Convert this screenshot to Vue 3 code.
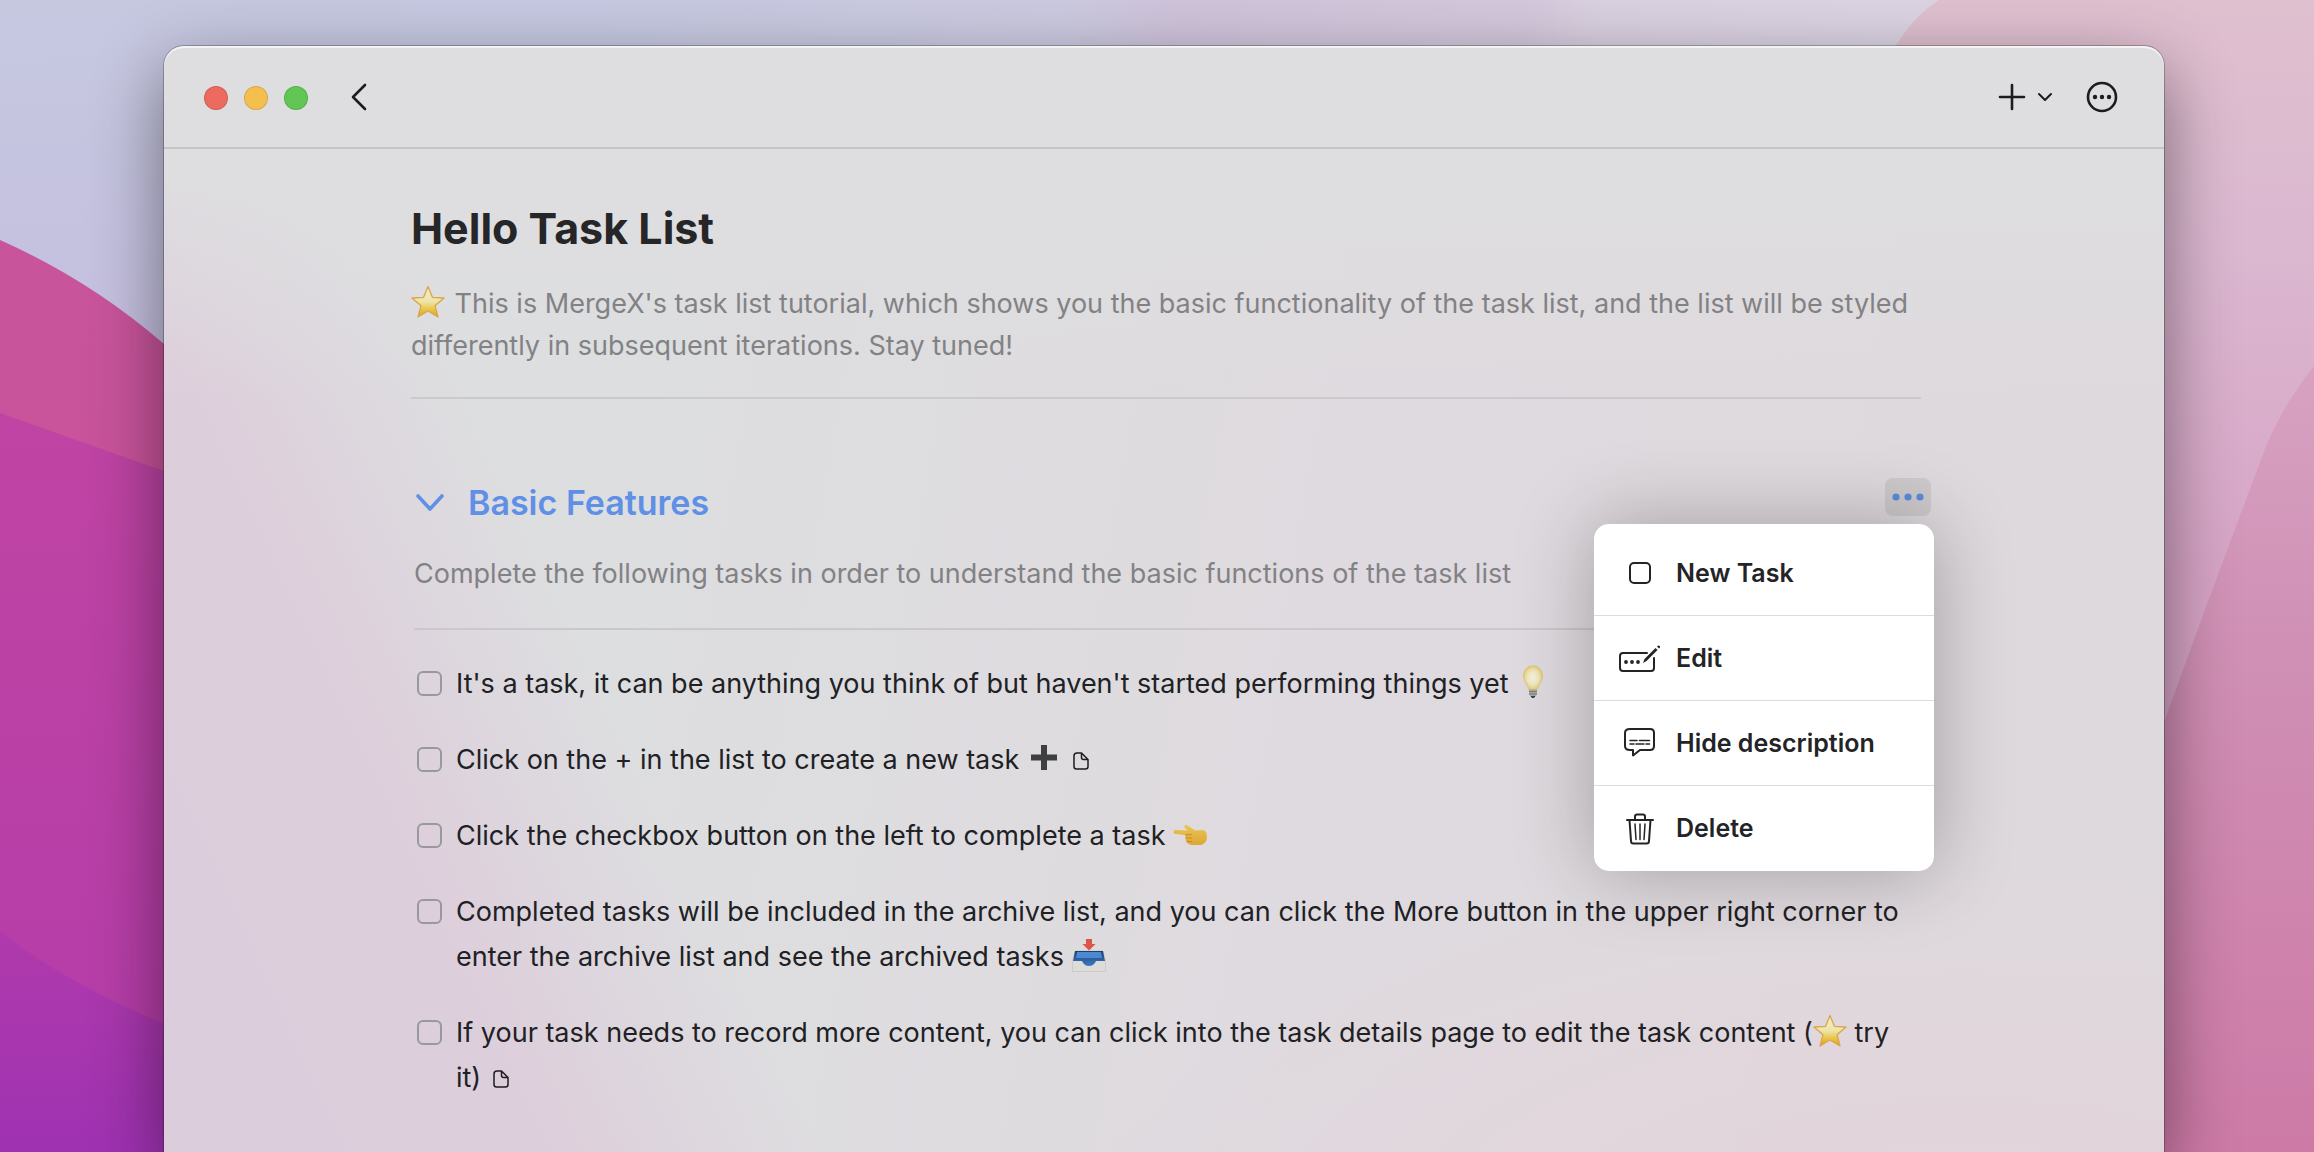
<script setup>
import { ref } from 'vue'

const groupOpen = ref(true)
const menu = [
  { icon: 'square', label: 'New Task' },
  { icon: 'edit', label: 'Edit' },
  { icon: 'bubble', label: 'Hide description' },
  { icon: 'trash', label: 'Delete' },
]
const tasks = ref([
  { done: false, parts: [{ text: "It's a task, it can be anything you think of but haven't started performing things yet " }, { icon: 'bulb' }] },
  { done: false, parts: [{ text: 'Click on the + in the list to create a new task ' }, { icon: 'plus' }, { text: ' ' }, { icon: 'file' }] },
  { done: false, parts: [{ text: 'Click the checkbox button on the left to complete a task ' }, { icon: 'hand' }] },
  { done: false, parts: [{ text: 'Completed tasks will be included in the archive list, and you can click the More button in the upper right corner to enter the archive list and see the archived tasks ' }, { icon: 'inbox' }] },
  { done: false, parts: [{ text: 'If your task needs to record more content, you can click into the task details page to edit the task content (' }, { icon: 'star' }, { text: ' try ' }, { text: 'it) ' }, { icon: 'file' }] },
])
</script>

<template>
  <div class="desktop">
    <svg class="wallpaper" viewBox="0 0 2314 1152" preserveAspectRatio="none" aria-hidden="true">
      <defs>
        <linearGradient id="sky" x1="0" y1="0" x2="1" y2="0">
          <stop offset="0" stop-color="#c6c8e0" />
          <stop offset="0.25" stop-color="#c5c8e0" />
          <stop offset="0.46" stop-color="#cccae0" />
          <stop offset="0.51" stop-color="#cfc3da" />
          <stop offset="0.66" stop-color="#d4c8dc" />
          <stop offset="0.69" stop-color="#d9d0e0" />
          <stop offset="0.84" stop-color="#dcd4e3" />
        </linearGradient>
        <linearGradient id="skyLow" x1="0" y1="0" x2="0" y2="1">
          <stop offset="0" stop-color="#c4c0e0" stop-opacity="0" />
          <stop offset="0.3" stop-color="#c5bfdf" />
        </linearGradient>
        <linearGradient id="ridge" x1="0" y1="0" x2="0" y2="1">
          <stop offset="0" stop-color="#c8549b" />
          <stop offset="1" stop-color="#c9529b" />
        </linearGradient>
        <linearGradient id="magenta" x1="0" y1="0" x2="0" y2="1">
          <stop offset="0" stop-color="#bf44a3" />
          <stop offset="1" stop-color="#b43caa" />
        </linearGradient>
        <linearGradient id="violet" x1="0" y1="0" x2="0" y2="1">
          <stop offset="0" stop-color="#b03aac" />
          <stop offset="1" stop-color="#9f32b2" />
        </linearGradient>
        <linearGradient id="blush" x1="0" y1="0" x2="0" y2="1">
          <stop offset="0" stop-color="#dfc0cf" />
          <stop offset="0.22" stop-color="#dbb7d0" />
          <stop offset="0.5" stop-color="#d7a4c6" />
        </linearGradient>
        <linearGradient id="rose" x1="0" y1="0" x2="0" y2="1">
          <stop offset="0" stop-color="#d7a2c2" />
          <stop offset="0.35" stop-color="#d090b5" />
          <stop offset="1" stop-color="#cd7aa7" />
        </linearGradient>
      </defs>
      <rect width="2314" height="1152" fill="url(#sky)" />
      <rect width="400" height="1152" fill="url(#skyLow)" />
      <path d="M1939 0C1920 12 1906 28 1892 52V1152H2314V0Z" fill="url(#blush)" />
      <path d="M2314 366Q2284 404 2266 446L2216 580Q2190 650 2166 717L2100 860V1152H2314Z" fill="url(#rose)" />
      <path d="M0 240Q90 280 164 344L260 430V1152H0Z" fill="url(#ridge)" />
      <path d="M0 413L164 471L260 500V1152H0Z" fill="url(#magenta)" />
      <path d="M0 931Q60 980 164 1024V1152H0Z" fill="url(#violet)" />
    </svg>

    <section class="window">
      <header class="bar">
        <div class="lights">
          <button class="light red" type="button" aria-label="Close"></button>
          <button class="light amber" type="button" aria-label="Minimise"></button>
          <button class="light green" type="button" aria-label="Zoom"></button>
        </div>
        <button class="ghost back" type="button" aria-label="Back">
          <svg width="16" height="28" viewBox="0 0 16 28"><path d="M14 2L2 14L14 26" /></svg>
        </button>
        <div class="tools">
          <button class="ghost add" type="button" aria-label="Add">
            <svg width="28" height="28" viewBox="0 0 28 28"><path d="M14 2V26M2 14H26" /></svg>
            <svg class="thin" width="16" height="10" viewBox="0 0 16 10"><path d="M2 2L8 8L14 2" /></svg>
          </button>
          <button class="ghost" type="button" aria-label="More">
            <svg width="32" height="32" viewBox="0 0 32 32">
              <circle cx="16" cy="16" r="14" />
              <g class="solid"><circle cx="9" cy="16" r="2.2" /><circle cx="16" cy="16" r="2.2" /><circle cx="23" cy="16" r="2.2" /></g>
            </svg>
          </button>
        </div>
      </header>

      <main class="page">
        <h1>Hello Task List</h1>
        <p class="intro"><svg class="emoji" viewBox="0 0 34 34" role="img" aria-label="star"><use href="#star" /></svg> This is MergeX's task list tutorial, which shows you the basic functionality of the task list, and the list will be styled differently in subsequent iterations. Stay tuned!</p>

        <section class="group">
          <div class="heading">
            <button class="toggle" type="button" :aria-expanded="groupOpen" aria-label="Toggle group" @click="groupOpen = !groupOpen">
              <svg width="28" height="18" viewBox="0 0 28 18"><path d="M2 2L14 15L26 2" /></svg>
            </button>
            <h2>Basic Features</h2>
            <div class="more">
              <button class="dots" type="button" aria-label="Group actions">
                <svg width="32" height="8" viewBox="0 0 32 8"><circle cx="4" cy="4" r="3.6" /><circle cx="16" cy="4" r="3.6" /><circle cx="28" cy="4" r="3.6" /></svg>
              </button>
              <div class="menu" role="menu">
                <button v-for="item in menu" :key="item.label" class="item" type="button" role="menuitem">
                  <svg width="44" height="36" viewBox="0 0 44 36" aria-hidden="true">
                    <rect v-if="item.icon === 'square'" x="12" y="8" width="20" height="20" rx="4" />
                    <g v-else-if="item.icon === 'edit'">
                      <path d="M29 13H5Q2 13 2 16V28Q2 31 5 31H33Q36 31 36 28V18" />
                      <g class="solid"><circle cx="8" cy="22" r="1.9" /><circle cx="14" cy="22" r="1.9" /><circle cx="20" cy="22" r="1.9" /><path d="M25 23L26.500 19L37.500 8L39.500 10L28.500 21Z" /><path d="M39 6.500L40.500 5.500Q42.500 5.500 42 7.500L41 8.500Z" /></g>
                    </g>
                    <g v-else-if="item.icon === 'bubble'">
                      <path d="M12 4H32Q36 4 36 8V21Q36 25 32 25H22L15 30.500V25H12Q7 25 7 21V8Q7 4 12 4Z" />
                      <path class="fine" d="M12 15.500H19M21.500 15.500H31.500M12 19H16M18 19H26M28 19H31.500" />
                    </g>
                    <g v-else>
                      <path d="M9 9H35M17 9V5.500Q17 3.500 19 3.500H25Q27 3.500 27 5.500V9M11.500 9L13 30Q13 32.500 15.500 32.500H28.500Q31 32.500 31 30L32.500 9" />
                      <path class="fine" d="M17 13L18 28.500M22 13V28.500M27 13L26 28.500" />
                    </g>
                  </svg>
                  <span>{{ item.label }}</span>
                </button>
              </div>
            </div>
          </div>
          <p class="about">Complete the following tasks in order to understand the basic functions of the task list</p>

          <ul v-if="groupOpen" class="tasks">
            <li v-for="(task, i) in tasks" :key="i">
              <input :id="'task-' + i" v-model="task.done" type="checkbox" />
              <label :for="'task-' + i"><template v-for="(part, j) in task.parts" :key="j"><svg v-if="part.icon" :class="part.icon === 'file' ? 'file' : 'emoji'" :viewBox="part.icon === 'file' ? '0 0 16 18' : '0 0 34 34'" role="img" :aria-label="part.icon"><use :href="'#' + part.icon" /></svg><template v-else>{{ part.text }}</template></template></label>
            </li>
          </ul>
        </section>
      </main>
    </section>

    <svg class="symbols" aria-hidden="true">
      <defs>
        <linearGradient id="gold" x1="0" y1="0" x2="0" y2="1">
          <stop offset="0" stop-color="#f1ecd4" /><stop offset="0.5" stop-color="#eee4a8" /><stop offset="0.75" stop-color="#e8c644" /><stop offset="1" stop-color="#dd9b32" />
        </linearGradient>
        <linearGradient id="skin" x1="0" y1="0" x2="0" y2="1">
          <stop offset="0" stop-color="#eac64f" /><stop offset="1" stop-color="#dda637" />
        </linearGradient>
        <radialGradient id="glow">
          <stop offset="0" stop-color="#f4f1e2" /><stop offset="0.6" stop-color="#eee7c0" /><stop offset="1" stop-color="#e4cf74" />
        </radialGradient>
        <linearGradient id="tray" x1="0" y1="0" x2="0" y2="1">
          <stop offset="0" stop-color="#213b66" /><stop offset="1" stop-color="#3d7bcb" />
        </linearGradient>
      </defs>
      <symbol id="star" viewBox="0 0 34 34">
        <path d="M17 1.500L21.400 12.300L33 13L24 20.700L27 32L17 26L7 32L10 20.700L1 13L12.600 12.300Z" fill="url(#gold)" stroke="#dda548" stroke-width="1.300" stroke-linejoin="round" />
      </symbol>
      <symbol id="bulb" viewBox="0 0 34 34">
        <path d="M17 1C11 1 7.500 5.500 7.500 11C7.500 16 11.500 19 13 24.500H21C22.500 19 26.500 16 26.500 11C26.500 5.500 23 1 17 1Z" fill="url(#glow)" stroke="#dcc678" stroke-width="1" />
        <path d="M13 24.500H21V29.500L19.500 31H14.500L13 29.500Z" fill="#a8a7a2" />
        <path d="M13 26.500H21M13 29H21" stroke="#74736f" stroke-width="0.800" />
        <path d="M14.500 31H19.500L18 33H16Z" fill="#3c3b3a" />
      </symbol>
      <symbol id="plus" viewBox="0 0 34 34"><path d="M14 4H20V13.500H30V19.500H20V29H14V19.500H4V13.500H14Z" fill="#3e3f41" /></symbol>
      <symbol id="hand" viewBox="0 0 34 34">
        <path d="M2 13Q0 13.500 0.500 15.500Q1 17 3 17L12.500 18Q12 21 13 24Q14.500 27.500 19 28H28Q34 26 34 20Q34 14 30 13L22 13.500L14.500 8.500Q12.500 7.500 11.500 8.500Q11 10 12.500 11.500L15 13.500Z" fill="url(#skin)" />
        <path d="M12.500 18L18.500 17.500M13 21H18.500M14 24.500H19" fill="none" stroke="#c58c2a" stroke-width="1" stroke-linecap="round" />
      </symbol>
      <symbol id="inbox" viewBox="0 0 34 34">
        <path d="M3 13H31L33.500 22V33.500H0.500V22Z" fill="#dcdcd8" stroke="#c9c8c4" stroke-width="0.800" />
        <path d="M3 13H31L33 23H24Q22 28 17 28Q12 28 10 23H1Z" fill="url(#tray)" />
        <path d="M5 14H29L30 20H4Z" fill="#4c89d4" />
        <path d="M14 1H20V6H23.500L17 12.500L10.500 6H14Z" fill="#dc5648" />
      </symbol>
      <symbol id="file" viewBox="0 0 16 18">
        <path d="M4 1H8.500L15 7.500V14.500Q15 17 12.500 17H3.500Q1 17 1 14.500V4Q1 1 4 1ZM8.500 1V5.500Q8.500 7.500 10.500 7.500H15" fill="none" stroke="#1d1d20" stroke-width="1.500" stroke-linejoin="round" />
      </symbol>
    </svg>
  </div>
</template>

<style>
body { margin: 0; }
</style>

<style scoped>
* { box-sizing: border-box; }
.desktop {
  position: relative;
  display: flex;
  height: 100vh;
  overflow: hidden;
  padding: 46px 150px 0 164px;
  color: #202124;
  font-family: Inter, "Noto Sans", sans-serif;
  font-size: 27px;
  line-height: 45px;
}
.wallpaper { position: absolute; top: 0; left: 0; width: 100%; height: 100%; }
.symbols { position: absolute; width: 0; height: 0; }
button { padding: 0; border: 0; background: none; color: inherit; font: inherit; }
svg { flex: none; }
.window {
  position: relative;
  flex: 1;
  border-radius: 20px 20px 0 0;
  background:
    linear-gradient(#dedee0 10%, #dedee000 32%),
    linear-gradient(65deg, #dccddd 0, #ddcedb 15%, #ddcedb00 26%),
    radial-gradient(ellipse 900px 400px at 90% 110%, #e3d3db, #e3d3db00),
    linear-gradient(100deg, #dddee0 25%, #dfdadf 60%, #ded9dc 100%);
  box-shadow: 0 0 0 1px #00000040, 0 24px 70px #00000078, inset 0 2px 1px #ffffffb0;
}
.bar {
  display: flex;
  align-items: center;
  height: 103px;
  padding: 0 46px 0 40px;
  border-bottom: 2px solid #c5c5c7;
}
.lights { display: flex; gap: 16px; margin-top: 2px; }
.light { width: 24px; height: 24px; border: 1px solid #0000001f; border-radius: 50%; }
.red { background: #ed6a5e; }
.amber { background: #f5bf4f; }
.green { background: #62c655; }
.ghost { display: flex; align-items: center; color: #1c1c1f; }
.ghost svg, .item svg { fill: none; stroke: currentColor; stroke-width: 2.6; stroke-linecap: round; stroke-linejoin: round; }
.ghost .thin { stroke-width: 2; }
.back { margin-left: 43px; }
.tools { display: flex; flex: 1; justify-content: flex-end; gap: 33px; }
.add { gap: 11px; }
.ghost .solid, .item .solid { fill: currentColor; stroke: none; }
.page { padding: 47px 243px 0 247px; }
h1 { margin: 0; color: #262629; font-size: 43px; font-weight: 700; line-height: 64px; }
.intro {
  margin: 23px 0 0;
  padding-bottom: 30px;
  border-bottom: 2px solid #cacacc;
  color: #828285;
  line-height: 42px;
}
.intro .emoji { margin-right: 2px; }
.group { margin-top: 73px; padding-left: 3px; }
.heading { display: flex; align-items: center; height: 62px; }
.toggle { display: flex; margin: 0 24px 0 2px; color: #5f90e6; }
.toggle svg { fill: none; stroke: currentColor; stroke-width: 3.6; stroke-linecap: round; stroke-linejoin: round; }
h2 { margin: 0; color: #5f90e6; font-size: 34px; font-weight: 600; line-height: 62px; }
.more { position: relative; align-self: flex-start; margin: 6px -10px 0 auto; }
.dots { display: flex; align-items: center; justify-content: center; width: 46px; height: 38px; border-radius: 8px; background: #cecacc; color: #5c8bdd; }
.dots svg { fill: currentColor; }
.menu {
  position: absolute;
  top: 46px;
  right: -3px;
  z-index: 1;
  width: 340px;
  padding-top: 7px;
  border-radius: 15px;
  background: #fff;
  box-shadow: 0 0 80px #00000048;
}
.item { display: flex; align-items: center; gap: 14px; width: 100%; height: 85px; padding-left: 24px; border-bottom: 1px solid #dcdcde; font-size: 25px; font-weight: 600; color: #242427; }
.item:last-child { border-bottom: 0; }
.item svg { stroke-width: 2; }
.item .fine { stroke-width: 1.5; }
.about { margin: 17px 0 0; padding-bottom: 32px; border-bottom: 2px solid #cbc7ca; color: #828285; }
.tasks { display: flex; flex-direction: column; gap: 31px; margin: 31px 0 0; padding: 0; list-style: none; }
.tasks li { display: flex; gap: 14px; padding-left: 3px; }
.tasks input { flex: none; width: 25px; height: 25px; margin: 10px 0 0; border: 2px solid #97999e; border-radius: 6px; appearance: none; }
.emoji { width: 34px; height: 34px; vertical-align: -6px; }
.file { width: 16px; height: 18px; margin-left: 4px; vertical-align: -1px; }
</style>
